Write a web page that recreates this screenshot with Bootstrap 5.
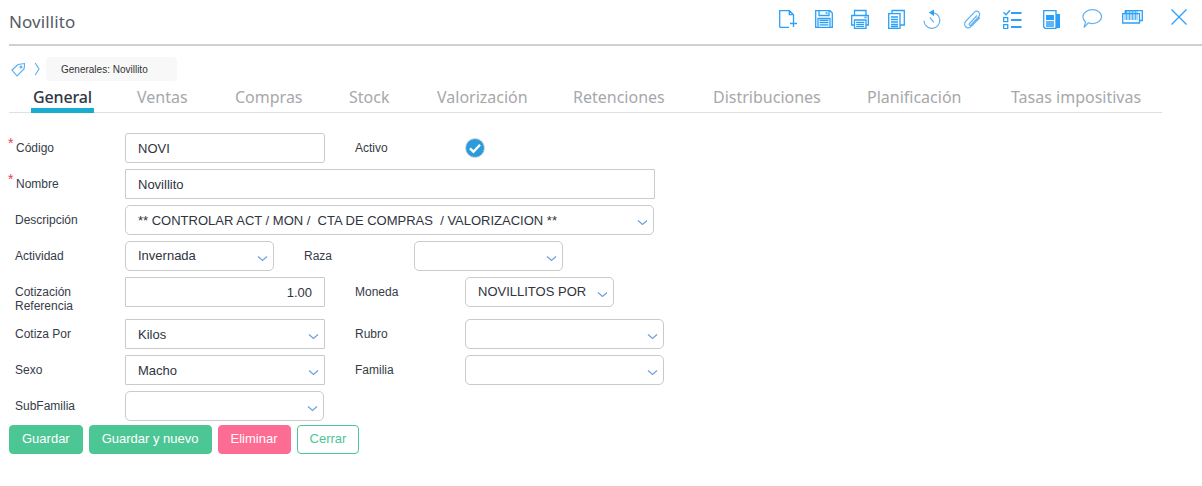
<!DOCTYPE html>
<html lang="es">
<head>
<meta charset="utf-8">
<title>Novillito</title>
<link rel="stylesheet" href="https://cdn.jsdelivr.net/npm/bootstrap@5.3.0/dist/css/bootstrap.min.css">
<style>
html,body{height:100%;background:#fff}
body{font-family:"Liberation Sans",Arial,sans-serif;font-size:13px;color:#353b48;padding:0 0 0 9px;overflow:hidden}
.top-head{height:46px;border-bottom:2px solid #cfd0d4}
.page-title{font-family:"Noto Sans",sans-serif;font-size:17px;letter-spacing:.1px;line-height:44px;color:#555b66;margin:0;font-weight:400}
.tool-grid{display:grid;grid-template-columns:36px 36px 37px 35px 40px 40px 40px 39px 40px 49px 16px;margin-right:15px;padding-top:9px}
.tool-grid svg{display:block}
.tool-grid .st{fill:none;stroke:#2aa0f8;stroke-width:1.3}
.tool-grid .lt{fill:none;stroke:#64b3f2;stroke-width:1.2}
.tool-grid .fl{fill:#2aa0f8;stroke:none}
.crumbs{height:24px;margin-top:11px}
.crumb-pill{background:#f8f8f9;border-radius:4px;width:131px;height:24px;margin-left:5px;font-size:10px;line-height:26px;padding-left:15px;color:#333}
.tab-strip{display:grid;grid-template-columns:104px 98px 114px 88px 136px 140px 154px 144px auto;width:1153px;height:32px;border-bottom:1px solid #dfe0e3;padding-left:22px}
.tab-link{font-family:"Noto Sans",sans-serif;font-size:16px;color:#a6a8ab;height:32px;line-height:32px;text-decoration:none;padding:0 2px;white-space:nowrap;justify-self:start}
.tab-link.on{color:#2f3746;border-bottom:5px solid #17acd0;font-weight:500;letter-spacing:-.15px}
.form-area{margin-top:20px}
.frow{display:flex;margin-bottom:6px}
.flbl{width:116px;flex:none;padding:8px 8px 0 6px;font-size:12px;line-height:14px;color:#353b48;margin:0}
.flbl.req{padding-left:0}
.star{display:inline-block;width:8px;margin-left:-1px;color:#ef3b4f;vertical-align:4px;font-size:14px;line-height:0}
.flbl.next{width:110px;margin-left:30px;padding-left:0}
.ctl{height:30px;border:1px solid #c9cacc;background-color:#fff;color:#2f3440;font-size:13px;padding:0 12px;border-radius:3px;font-family:"Liberation Sans",Arial,sans-serif;box-shadow:none}
.ctl.form-select{padding:0 24px 0 12px;background-size:11px 7px;background-position:right 5px top 13px;font-size:13px;line-height:28px;background-image:url("data:image/svg+xml,%3Csvg xmlns='http://www.w3.org/2000/svg' viewBox='0 0 11 7'%3E%3Cpath d='M1 1.5l4.5 4 4.5-4' fill='none' stroke='%236fa3dc' stroke-width='1.3'/%3E%3C/svg%3E");border-radius:5px}
.ctl.form-select.nudge{padding-top:1px}
.ctl.form-select.sq{border-radius:1px}
.w199{width:199px}.w200{width:200px}.w149{width:149px}.w529{width:529px}.w530{width:530px}
.sq{border-radius:1px}
.to-end{text-align:right}
.chk-wrap{width:20px;height:20px;margin-top:5px}
.chk-wrap svg{display:block}
.act-row{gap:6px;margin-top:-2px}
.act-btn{font-size:13px;height:29px;padding:0 12px 2px;line-height:25px;border-radius:4px;border:1px solid #4dc695;background:#4dc695;color:#fff}
.act-btn:hover{background:#4dc695;color:#fff;border-color:#4dc695}
.act-btn.del{background:#fd6c93;border-color:#fd6c93}
.act-btn.out{background:#fff;color:#4dc695}
</style>
</head>
<body>
<header class="top-head d-flex justify-content-between align-items-start">
  <h1 class="page-title">Novillito</h1>
  <div class="tool-grid">
    <svg width="18" height="20" viewBox="0 0 18 20"><path class="st" d="M.7 18.300V1.700h9.800l4 4V11M.7 18.300H10M10.300 1.700v4h4.200M11 14.500h7M14.500 11v7"/></svg>
    <svg width="18" height="20" viewBox="0 0 18 20"><path class="st" d="M.7 1.700H15l2.300 2.300v14.300H.7zM4 1.700v4.800h10V1.700M10.500 4H12.500M3 18.300V9.500h12v8.800M4.500 11.500h9M4.500 13.700h9M4.500 15.900h9"/></svg>
    <svg width="18" height="20" viewBox="0 0 18 20"><path class="st" d="M3.500 6V1.500H15V6M3 16H.7V6.500h16.600V16H15M3.500 11H15v8.300H3.500zM5.200 13.300h8M5.200 15.300h8M5.200 17.300h8M13.500 8.500h2"/></svg>
    <svg width="17" height="20" viewBox="0 0 17 20"><path class="st" d="M4 4.500V1.500h12.300V16H12M.7 4.700H12v14.600H.7zM3 8h7M3 10.500h7M3 13h7M3 15.500h7M3 17.500h7"/></svg>
    <svg width="18" height="20" viewBox="0 0 18 20"><path class="lt" d="M8 3.600A7.900 7.900 0 1 1 1 11.700M6.800 8.300l4 5"/><path class="fl" d="M5.800 3.500 11 .5v6.400z"/></svg>
    <svg width="18" height="20" viewBox="0 0 18 20"><path class="lt" d="M14 6.500 6.500 14.500c-1 1.200.5 2.500 1.500 1.500l7.500-8C18.500 4.500 14.500.2 11.500 3.200L3 12c-3.500 4 1 9.500 5 5.500l9-9"/></svg>
    <svg width="19" height="20" viewBox="0 0 19 20"><path class="st" d="M.5 3.300 3 5.800 7 1.300M.7 8.700h4v4h-4zM.7 15.700h4v4h-4z"/><path class="st" style="stroke-width:2" d="M8 4h10.500M8 11h10.500M8 18h10.500"/></svg>
    <svg width="18" height="20" viewBox="0 0 18 20"><path class="st" d="M.7 1.700H13v17.600H2L.7 18zM3 13h8M3 15h8M3 17h8"/><path class="fl" d="M3 6h8v5H3zM13 5h4v14h-4z"/></svg>
    <svg width="20" height="20" viewBox="0 0 20 20"><path class="lt" d="M10.500.7c5 0 9 3 9 6.900s-4 7-9 7c-1.500 0-3-.3-4.200-.8L2 18.500l1.500-5.500C1.800 11.500.9 9.600.9 7.600.9 3.700 5.500.7 10.500.7z"/></svg>
    <svg width="21" height="15" viewBox="0 0 21 15"><path class="st" d="M3.500 4V1.700h16.800v9.800h-2.800M.7 4.700h16.800V14H.7z"/><path class="st" style="stroke-width:.8" d="M3 2v9M4.500 2v9M6 2v9M7.500 2v9M9 2v9M10.500 2v9M12 2v9M13.500 2v9M15 2v9"/></svg>
    <svg width="16" height="16" viewBox="0 0 16 16"><path class="st" d="M.5.500 15.500 15.500M15.500.5.500 15.500"/></svg>
  </div>
</header>

<nav class="crumbs d-flex align-items-center">
  <svg width="16" height="16" viewBox="0 0 16 16" fill="none" stroke="#55aef2" stroke-width="1.100"><path d="M3 9 9 3.500l6.800-1-.8 5.500-7 7z"/><circle cx="12" cy="6" r="1"/></svg>
  <svg width="8" height="16" viewBox="0 0 8 16" fill="none" stroke="#55aef2" stroke-width="1.100" class="ms-2"><path d="M2.200 2l3.800 6-3.800 6"/></svg>
  <div class="crumb-pill">Generales: Novillito</div>
</nav>

<div class="tab-strip">
  <a class="tab-link on" href="#">General</a>
  <a class="tab-link" href="#">Ventas</a>
  <a class="tab-link" href="#">Compras</a>
  <a class="tab-link" href="#">Stock</a>
  <a class="tab-link" href="#">Valorización</a>
  <a class="tab-link" href="#">Retenciones</a>
  <a class="tab-link" href="#">Distribuciones</a>
  <a class="tab-link" href="#">Planificación</a>
  <a class="tab-link" href="#">Tasas impositivas</a>
</div>

<form class="form-area">
  <div class="frow">
    <label class="flbl req"><span class="star">*</span>Código</label>
    <input class="ctl w200" value="NOVI">
    <label class="flbl next">Activo</label>
    <div class="chk-wrap">
      <svg width="20" height="20" viewBox="0 0 20 20"><circle cx="10" cy="10" r="9.500" fill="#2b9bdc" stroke="#d5d8dc"/><path d="M5 10.300l3.500 3.500 6.500-7" fill="none" stroke="#fff" stroke-width="2.400"/></svg>
    </div>
  </div>
  <div class="frow">
    <label class="flbl req"><span class="star">*</span>Nombre</label>
    <input class="ctl w530 sq" value="Novillito">
  </div>
  <div class="frow">
    <label class="flbl">Descripción</label>
    <select class="form-select ctl w529 nudge"><option>** CONTROLAR ACT / MON /&nbsp; CTA DE COMPRAS&nbsp; / VALORIZACION **</option></select>
  </div>
  <div class="frow">
    <label class="flbl">Actividad</label>
    <select class="form-select ctl w149"><option>Invernada</option></select>
    <label class="flbl next">Raza</label>
    <select class="form-select ctl w149"><option></option></select>
  </div>
  <div class="frow">
    <label class="flbl">Cotización Referencia</label>
    <input class="ctl w200 sq to-end" value="1.00">
    <label class="flbl next">Moneda</label>
    <select class="form-select ctl w149"><option>NOVILLITOS POR KILO</option></select>
  </div>
  <div class="frow">
    <label class="flbl">Cotiza Por</label>
    <select class="form-select ctl w200 sq nudge"><option>Kilos</option></select>
    <label class="flbl next">Rubro</label>
    <select class="form-select ctl w199"><option></option></select>
  </div>
  <div class="frow">
    <label class="flbl">Sexo</label>
    <select class="form-select ctl w200 sq nudge"><option>Macho</option></select>
    <label class="flbl next">Familia</label>
    <select class="form-select ctl w199"><option></option></select>
  </div>
  <div class="frow">
    <label class="flbl">SubFamilia</label>
    <select class="form-select ctl w199"><option></option></select>
  </div>
  <div class="d-flex act-row">
    <button type="button" class="btn act-btn">Guardar</button>
    <button type="button" class="btn act-btn">Guardar y nuevo</button>
    <button type="button" class="btn act-btn del">Eliminar</button>
    <button type="button" class="btn act-btn out">Cerrar</button>
  </div>
</form>
<script src="https://cdn.jsdelivr.net/npm/bootstrap@5.3.0/dist/js/bootstrap.bundle.min.js"></script>
</body>
</html>
